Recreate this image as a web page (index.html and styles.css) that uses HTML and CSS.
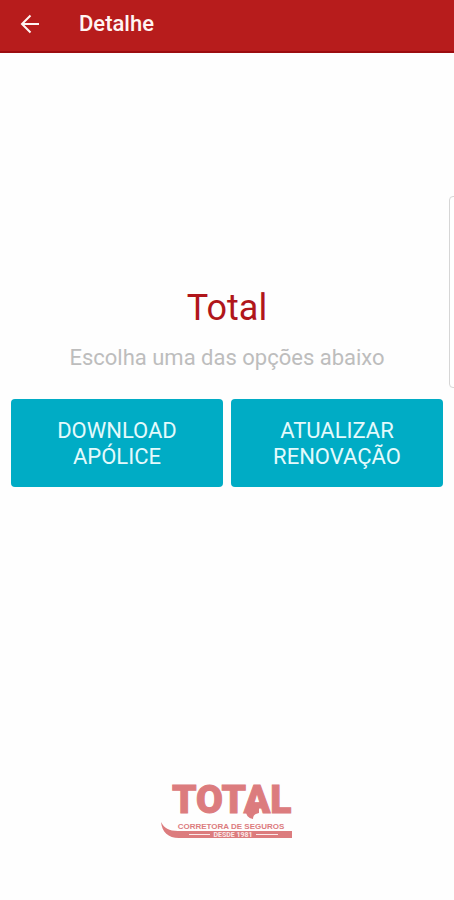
FILE: index.html
```
<!DOCTYPE html>
<html lang="pt-BR">
<head>
  <meta charset="UTF-8" />
  <meta name="viewport" content="width=device-width, initial-scale=1" />
  <title>Detalhe</title>
  <link rel="stylesheet" href="styles.css">
</head>
<body>

  <header class="topbar">
    <button class="back" type="button" aria-label="Voltar">
      <svg width="20" height="20" viewBox="0 0 20 20" fill="none" stroke="currentColor" stroke-width="2">
        <path d="M19 10H2.500M10.500 1.500L2 10l8.500 8.500" />
      </svg>
    </button>
    <h1 class="topbar-title">Detalhe</h1>
  </header>

  <main class="content">
    <h2 class="company">Total</h2>
    <p class="hint">Escolha uma das opções abaixo</p>
    <div class="actions">
      <button class="action" type="button">DOWNLOAD<br>APÓLICE</button>
      <button class="action" type="button">ATUALIZAR<br>RENOVAÇÃO</button>
    </div>
  </main>

  <footer class="footer">
    <svg class="logo" width="134" height="68" viewBox="0 -10 134 68" role="img" aria-label="Total Corretora de Seguros desde 1981">
      <text class="logo-name" x="12" y="31">TOTAL</text>
      <path d="M86 29c0 4 2 7 7 8 0-4 2-5 6-6v-7h-8z" />
      <text class="logo-sub" x="71" y="47" text-anchor="middle">CORRETORA DE SEGUROS</text>
      <path d="M1 40c3 6 8 9 17 9H132v7H19C8 56 2 50 1 40z" />
      <path class="logo-line" d="M29 52.500H50M96 52.500H118" />
      <text class="logo-since" x="73" y="55" text-anchor="middle">DESDE 1981</text>
    </svg>
  </footer>

  <div class="edge-handle"></div>

</body>
</html>
```

FILE: styles.css
```
* {
  box-sizing: border-box;
}
body {
  margin: 0;
  min-height: 100vh;
  display: flex;
  flex-direction: column;
  position: relative;
  overflow-x: hidden;
  font-family: Roboto, sans-serif;
  background-color: #fefefe;
}
button {
  border: none;
  font-family: inherit;
  cursor: pointer;
}
.topbar {
  display: flex;
  align-items: center;
  gap: 39px;
  height: 53px;
  padding: 0 20px 4px;
  background-color: #b71c1c;
  border-bottom: 2px solid #9c0d10;
  color: #fff5f3;
}
.back {
  display: flex;
  padding: 0;
  background: none;
  color: inherit;
}
.topbar-title {
  margin: 0;
  font-size: 22px;
  font-weight: 500;
  line-height: 26px;
}
.content {
  flex: 1;
  display: flex;
  flex-direction: column;
  justify-content: center;
  padding: 0 11px;
  text-align: center;
}
.company {
  margin: 0;
  font-size: 36px;
  font-weight: 400;
  line-height: 42px;
  color: #b0161b;
}
.hint {
  margin: 16px 0 28px;
  font-size: 22px;
  line-height: 26px;
  color: #bdbdbd;
}
.actions {
  display: flex;
  gap: 8px;
}
.action {
  flex: 1;
  padding: 19px 8px 17px;
  border-radius: 4px;
  background-color: #00acc5;
  color: #e4fafc;
  font-size: 22px;
  line-height: 26px;
}
.footer {
  display: flex;
  justify-content: center;
  padding: 52px 0 60px;
}
.logo {
  overflow: visible;
  fill: #dc7c7e;
}
.logo-name {
  font-size: 39px;
  font-weight: 900;
  stroke: #dc7c7e;
  stroke-width: 1;
}
.logo-sub {
  font-family: "Liberation Sans", sans-serif;
  font-size: 8px;
  font-weight: 700;
}
.logo-since {
  font-size: 7px;
  font-weight: 700;
  fill: #fbe9e9;
}
.logo-line {
  stroke: #fbe9e9;
  stroke-width: 1;
}
.edge-handle {
  position: absolute;
  top: 196px;
  right: -4px;
  width: 9px;
  height: 192px;
  border: 1px solid #d6d6d6;
  border-radius: 4px;
  background-color: #fff;
}
```
